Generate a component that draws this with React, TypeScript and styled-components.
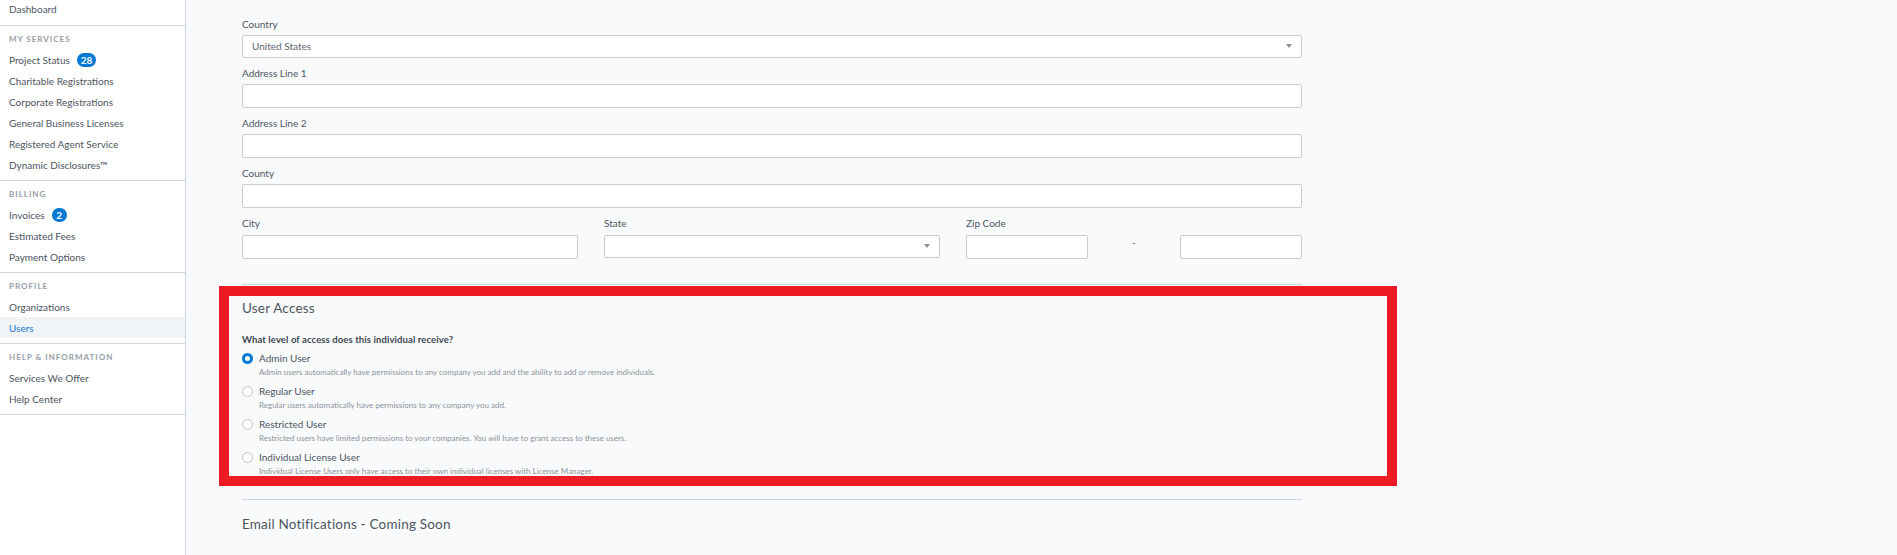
import React from "react";
import styled, { createGlobalStyle } from "styled-components";

const GlobalStyle = createGlobalStyle`
  html, body {
    margin: 0;
    height: 100%;
    overflow: hidden;
    background: #f9fafc;
    font-family: Lato, "Open Sans", sans-serif;
  }
  * {
    box-sizing: border-box;
  }
`;

const Page = styled.div`
  position: relative;
  display: flex;
  width: 1897px;
  height: 555px;
  overflow: hidden;
`;

const Sidebar = styled.nav`
  width: 186px;
  flex-shrink: 0;
  background: #ffffff;
  border-right: 1px solid #cfd5de;
`;

const NavGroup = styled.div`
  padding: 7px 0 5px;
  border-bottom: 1px solid #cfd5de;

  &:first-child {
    margin-top: -9px;
    padding-bottom: 6px;
  }
`;

const NavHeading = styled.div`
  height: 12px;
  margin-bottom: 4px;
  padding-left: 9px;
  font-size: 8px;
  line-height: 12px;
  font-weight: 700;
  letter-spacing: 1px;
  text-transform: uppercase;
  color: #969da8;
`;

const NavLink = styled.a<{ $active?: boolean }>`
  display: flex;
  align-items: center;
  height: 21px;
  padding-left: 9px;
  font-size: 10px;
  color: ${(props) => (props.$active ? "#1f78d1" : "#4b5561")};
  background: ${(props) => (props.$active ? "#f1f4f7" : "transparent")};
`;

const Badge = styled.span`
  display: inline-flex;
  align-items: center;
  justify-content: center;
  min-width: 15px;
  height: 14px;
  margin-left: 7px;
  padding: 0 4px;
  border-radius: 8px;
  font-size: 10px;
  font-weight: 700;
  color: #ffffff;
  background: #0078d4;
`;

const Main = styled.main`
  flex: 1;
  padding: 16px 0 0 56px;
  background: #f9fafc;
`;

const Form = styled.div`
  width: 1060px;
`;

const Field = styled.div`
  margin-bottom: 7px;
`;

const Label = styled.div`
  height: 16px;
  margin-bottom: 3px;
  font-size: 10px;
  line-height: 16px;
  color: #4b5561;
`;

const Input = styled.div`
  height: 24px;
  background: #ffffff;
  border: 1px solid #c9cbce;
  border-radius: 2px;
`;

const Select = styled(Input)`
  display: flex;
  align-items: center;
  justify-content: space-between;
  height: 23px;
  margin-bottom: 1px;
  padding: 0 9px 2px;
  font-size: 10px;
  color: #5d6670;
`;

const Caret = styled.span`
  width: 0;
  height: 0;
  border-left: 3px solid transparent;
  border-right: 3px solid transparent;
  border-top: 4px solid #8a8f96;
`;

const AddressRow = styled.div`
  display: grid;
  grid-template-columns: 336px 336px 122px 1fr 122px;
  column-gap: 26px;

  ${Label} {
    margin-bottom: 4px;
  }
`;

const ZipDash = styled.div`
  margin-top: 21px;
  text-align: center;
  font-size: 9px;
  line-height: 14px;
  color: #4b5561;
`;

const Divider = styled.hr<{ $gap: number }>`
  height: 1px;
  margin: ${(props) => props.$gap}px 0 0;
  border: 0;
  background: #ced4de;
`;

const Heading = styled.h2`
  margin: 0;
  font-size: 13.5px;
  line-height: 20px;
  font-weight: 400;
  letter-spacing: 0.2px;
  color: #4b5561;
`;

const AccessSection = styled.section`
  padding: 13px 0 0;
`;

const Question = styled.div`
  margin: 14px 0 0;
  font-size: 9.5px;
  line-height: 16px;
  font-weight: 700;
  letter-spacing: 0.1px;
  color: #3d4650;
`;

const RadioRow = styled.div`
  display: grid;
  grid-template-columns: 11px 1fr;
  column-gap: 6px;
  align-items: center;
  height: 33px;
`;

const Radio = styled.span<{ $checked?: boolean }>`
  width: 11px;
  height: 11px;
  margin-top: -12px;
  border-radius: 50%;
  background: #ffffff;
  border: ${(props) => (props.$checked ? "3.5px solid #0078d4" : "1px solid #bfc4ca")};
`;

const RadioTitle = styled.div`
  font-size: 10px;
  line-height: 15px;
  color: #4b5561;
`;

const RadioHint = styled.div`
  font-size: 8px;
  line-height: 13px;
  color: #8b929b;
`;

const EmailSection = styled.section`
  padding: 14px 0 0;
`;

// the red annotation drawn on top of the screenshot
const Highlight = styled.div`
  position: absolute;
  left: 219px;
  top: 286px;
  width: 1178px;
  height: 200px;
  border: 10px solid #ed1c24;
`;

const services = [
  "Charitable Registrations",
  "Corporate Registrations",
  "General Business Licenses",
  "Registered Agent Service",
  "Dynamic Disclosures™",
];

const accessLevels = [
  {
    title: "Admin User",
    hint: "Admin users automatically have permissions to any company you add and the ability to add or remove individuals.",
    checked: true,
  },
  {
    title: "Regular User",
    hint: "Regular users automatically have permissions to any company you add.",
  },
  {
    title: "Restricted User",
    hint: "Restricted users have limited permissions to your companies. You will have to grant access to these users.",
  },
  {
    title: "Individual License User",
    hint: "Individual License Users only have access to their own individual licenses with License Manager.",
  },
];

const App = () => {
  return (
    <Page>
      <GlobalStyle />
      <Sidebar>
        <NavGroup>
          <NavLink>Dashboard</NavLink>
        </NavGroup>
        <NavGroup>
          <NavHeading>My Services</NavHeading>
          <NavLink>
            Project Status <Badge>28</Badge>
          </NavLink>
          {services.map((service) => (
            <NavLink key={service}>{service}</NavLink>
          ))}
        </NavGroup>
        <NavGroup>
          <NavHeading>Billing</NavHeading>
          <NavLink>
            Invoices <Badge>2</Badge>
          </NavLink>
          <NavLink>Estimated Fees</NavLink>
          <NavLink>Payment Options</NavLink>
        </NavGroup>
        <NavGroup>
          <NavHeading>Profile</NavHeading>
          <NavLink>Organizations</NavLink>
          <NavLink $active>Users</NavLink>
        </NavGroup>
        <NavGroup>
          <NavHeading>Help &amp; Information</NavHeading>
          <NavLink>Services We Offer</NavLink>
          <NavLink>Help Center</NavLink>
        </NavGroup>
      </Sidebar>

      <Main>
        <Form>
          <Field>
            <Label>Country</Label>
            <Select>
              United States
              <Caret />
            </Select>
          </Field>
          <Field>
            <Label>Address Line 1</Label>
            <Input />
          </Field>
          <Field>
            <Label>Address Line 2</Label>
            <Input />
          </Field>
          <Field>
            <Label>County</Label>
            <Input />
          </Field>
          <AddressRow>
            <Field>
              <Label>City</Label>
              <Input />
            </Field>
            <Field>
              <Label>State</Label>
              <Select>
                <span />
                <Caret />
              </Select>
            </Field>
            <Field>
              <Label>Zip Code</Label>
              <Input />
            </Field>
            <ZipDash>-</ZipDash>
            <Field>
              <Label>&nbsp;</Label>
              <Input />
            </Field>
          </AddressRow>
          <Divider $gap={18} />
          <AccessSection>
            <Heading>User Access</Heading>
            <Question>What level of access does this individual receive?</Question>
            {accessLevels.map((level) => (
              <RadioRow key={level.title}>
                <Radio $checked={level.checked} />
                <div>
                  <RadioTitle>{level.title}</RadioTitle>
                  <RadioHint>{level.hint}</RadioHint>
                </div>
              </RadioRow>
            ))}
          </AccessSection>
          <Divider $gap={19} />
          <EmailSection>
            <Heading>Email Notifications - Coming Soon</Heading>
          </EmailSection>
        </Form>
      </Main>
      <Highlight />
    </Page>
  );
};

export default App;
